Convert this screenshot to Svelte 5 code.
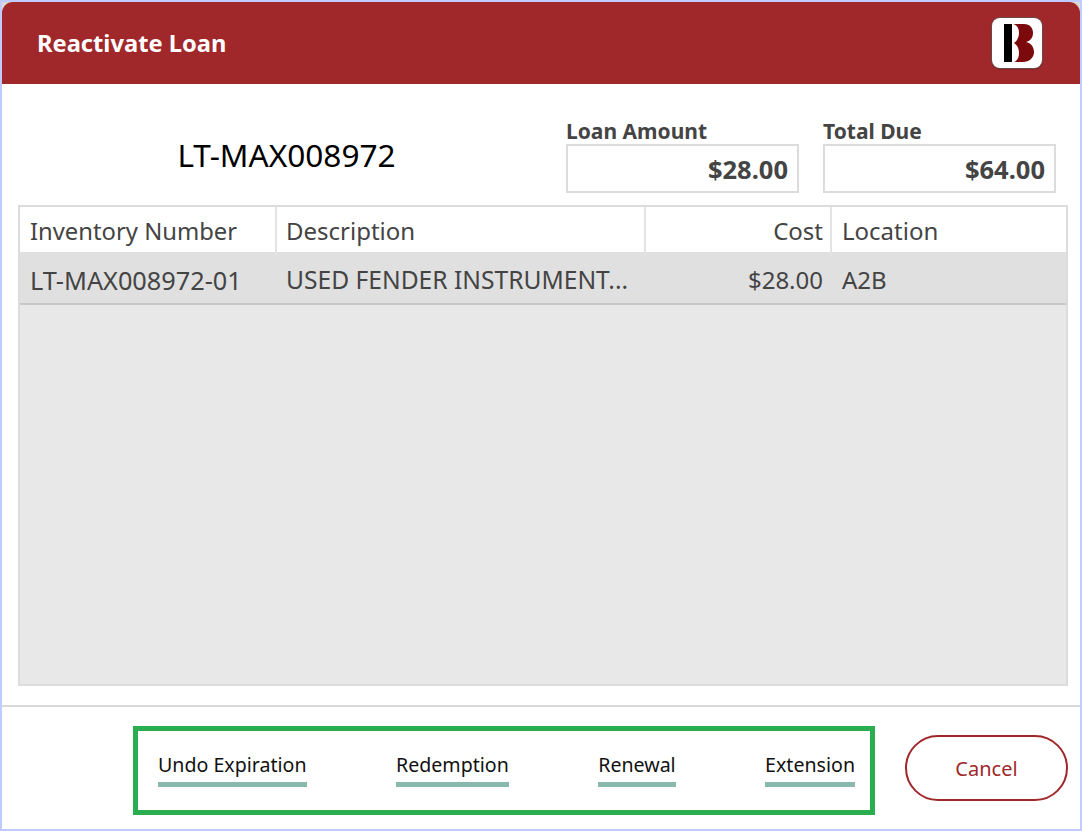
<script>
  const rows = [
    { number: 'LT-MAX008972-01', description: 'USED FENDER INSTRUMENT...', cost: '$28.00', location: 'A2B' }
  ];
  const actions = ['Undo Expiration', 'Redemption', 'Renewal', 'Extension'];
</script>

<div class="window">
  <div class="title-back">
    <header class="title-bar">
      <h1>Reactivate Loan</h1>
      <div class="logo">
        <svg width="50" height="50" viewBox="0 0 50 50">
          <rect x="12" y="6" width="8" height="38" fill="#000" />
          <path d="M21 6 H32 C38 6 41 10 41 15 C41 20 38 23 34 24 C39 25 42 29 42 34 C42 40 37 44 31 44 H22 C25 43 27 40 27 35 C27 30 25 27 22 25 C25 23 27 19 27 15 C27 10 25 7 21 6 Z" fill="#7c0a0c" />
        </svg>
      </div>
    </header>
  </div>

  <section class="summary">
    <div class="loan-number">LT-MAX008972</div>
    <div class="field">
      <span class="label">Loan Amount</span>
      <div class="value">$28.00</div>
    </div>
    <div class="field">
      <span class="label">Total Due</span>
      <div class="value">$64.00</div>
    </div>
  </section>

  <section class="grid">
    <div class="grid-row head">
      <div class="cell number">Inventory Number</div>
      <div class="cell desc">Description</div>
      <div class="cell right">Cost</div>
      <div class="cell">Location</div>
    </div>
    {#each rows as row}
      <div class="grid-row item">
        <div class="cell number">{row.number}</div>
        <div class="cell desc">{row.description}</div>
        <div class="cell right">{row.cost}</div>
        <div class="cell">{row.location}</div>
      </div>
    {/each}
  </section>

  <footer class="footer">
    <div class="actions">
      {#each actions as action}
        <button class="action">{action}</button>
      {/each}
    </div>
    <button class="cancel">Cancel</button>
  </footer>
</div>

<style>
  :global(body) {
    margin: 0;
    background: #fff;
  }
  .window {
    box-sizing: border-box;
    width: 1082px;
    height: 831px;
    border: 2px solid #c0cbff;
    background: #fff;
    font-family: "Noto Sans", "Open Sans", sans-serif;
    color: #444;
    display: flex;
    flex-direction: column;
  }
  .title-back {
    flex: none;
    background: #dcd8d4;
  }
  .title-bar {
    height: 82px;
    background: #a0282b;
    border-radius: 11px 11px 0 0;
    display: flex;
    align-items: center;
    justify-content: space-between;
    padding: 0 38px 0 35px;
  }
  h1 {
    margin: 0;
    color: #fff;
    font-size: 23.7px;
    font-weight: 700;
  }
  .logo {
    width: 50px;
    height: 50px;
    background: #fff;
    border-radius: 8px;
    box-shadow: 0 0 0 1px #6b4a4a, 0 1px 2px rgba(0, 0, 0, 0.4);
  }
  .logo svg {
    display: block;
  }
  .summary {
    height: 121px;
    flex: none;
    display: flex;
    align-items: flex-end;
    padding: 0 24px 12px 29px;
    box-sizing: border-box;
    gap: 24px;
  }
  .loan-number {
    width: 511px;
    text-align: center;
    color: #000;
    font-size: 31.6px;
    line-height: 49px;
    padding-bottom: 14px;
  }
  .field {
    width: 233px;
  }
  .label {
    display: block;
    font-size: 21px;
    font-weight: 700;
    line-height: 24px;
    margin-bottom: 1px;
  }
  .value {
    box-sizing: border-box;
    height: 49px;
    border: 2px solid #dcdcdc;
    text-align: right;
    font-size: 25.5px;
    font-weight: 700;
    line-height: 47px;
    padding-right: 9px;
  }
  .grid {
    box-sizing: border-box;
    width: 1050px;
    height: 481px;
    flex: none;
    margin-left: 16px;
    border: 2px solid #dcdcdc;
    background: #e8e8e8;
  }
  .grid-row {
    display: grid;
    grid-template-columns: 257px 369px 186px 1fr;
    font-size: 24px;
  }
  .head {
    height: 47px;
    box-sizing: border-box;
    background: #fff;
    border-bottom: 2px solid #e0e0e0;
  }
  .head .cell {
    border-right: 2px solid #e4e4e4;
    line-height: 48px;
  }
  .head .cell:last-child {
    border-right: 0;
  }
  .head .right {
    padding-right: 7px;
  }
  .head .number {
    font-size: 23.8px;
  }
  .item {
    height: 51px;
    box-sizing: border-box;
    background: #e0e0e0;
    border-bottom: 2px solid #c8c8c8;
  }
  .item .cell {
    line-height: 52px;
  }
  .item .right {
    padding-right: 9px;
  }
  .item .number {
    font-size: 25.3px;
  }
  .item .desc {
    font-size: 24.6px;
  }
  .cell {
    box-sizing: border-box;
    padding: 0 8px 0 10px;
    white-space: nowrap;
    min-width: 0;
  }
  .desc {
    padding-left: 9px;
  }
  .right {
    text-align: right;
  }
  .footer {
    flex: 1;
    margin-top: 19px;
    border-top: 2px solid #d8d8d8;
    display: flex;
    align-items: flex-start;
    padding: 19px 0 0 131px;
  }
  .actions {
    box-sizing: border-box;
    width: 742px;
    height: 89px;
    border: 5px solid #2bae4f;
    display: flex;
    justify-content: space-between;
    padding: 15px 15px 0 20px;
  }
  .action {
    height: 41px;
    padding: 0;
    border: 0;
    border-bottom: 5px solid #88b9ac;
    background: none;
    font: inherit;
    font-size: 19.6px;
    line-height: 38px;
    color: #111;
  }
  .cancel {
    box-sizing: border-box;
    width: 163px;
    height: 66px;
    margin: 9px 0 0 30px;
    padding-top: 2px;
    border: 2px solid #a0282b;
    border-radius: 33px;
    background: #fff;
    font: inherit;
    font-size: 20px;
    color: #a0282b;
  }
</style>
